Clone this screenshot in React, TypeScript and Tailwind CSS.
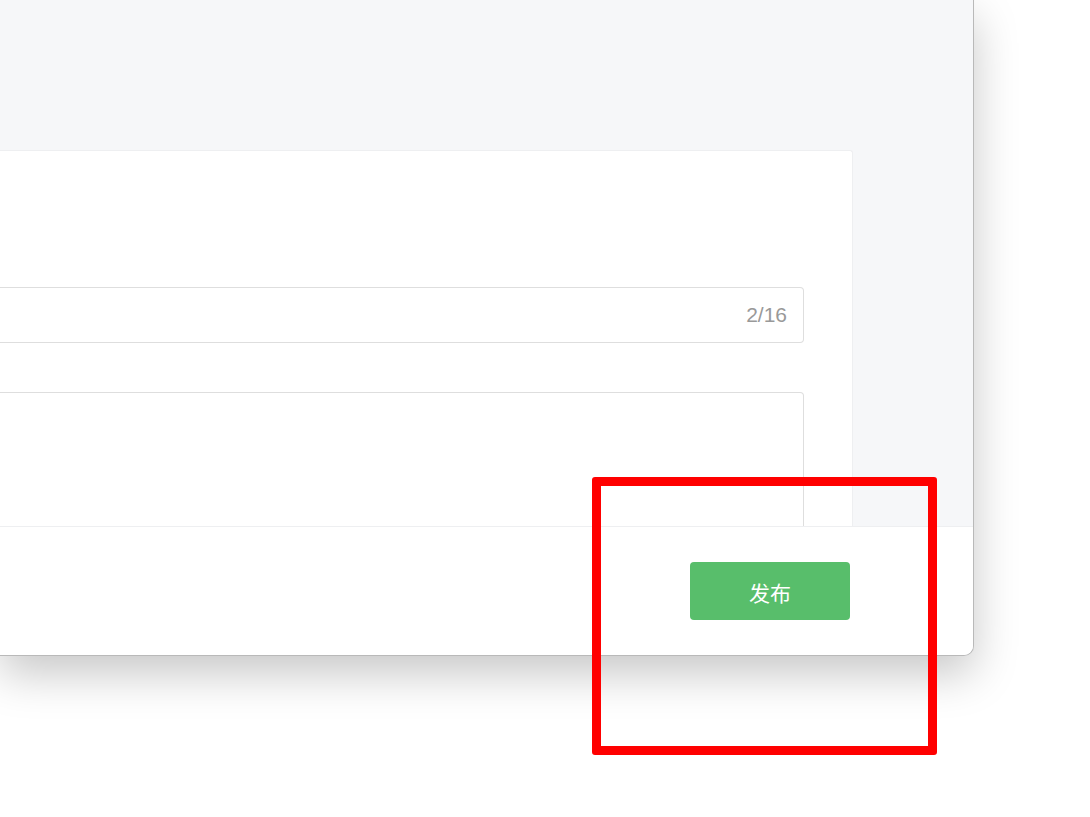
import React from "react";

export default function App() {
  return (
    <div
      className="relative w-[1090px] h-[817px] overflow-hidden bg-white"
      style={{ fontFamily: '"Noto Sans", "Noto Sans CJK SC", sans-serif' }}
    >
      {/* window */}
      <div className="flex flex-col w-[974px] h-[656px] overflow-hidden rounded-br-[10px] border-r border-b border-[#b9b9b9] bg-[#f6f7f9] shadow-[0_18px_45px_rgba(0,0,0,0.22)]">
        <div className="flex-1 overflow-hidden pt-[150px]">
          <div className="w-[853px] h-full bg-white border-r border-t border-[#eeeff1] rounded-tr-[3px] pt-[136px] pr-[48px]">
            <div className="flex items-center justify-end h-[56px] border border-l-0 border-[#dedede] rounded-r-[4px] pr-[16px]">
              <span className="text-[21px] text-[#999999]" style={{ fontFamily: '"Liberation Sans", sans-serif' }}>
                2/16
              </span>
            </div>
            <div className="mt-[49px] h-[200px] border border-l-0 border-[#dedede] rounded-tr-[4px]" />
          </div>
        </div>
        <div className="flex items-start justify-end h-[129px] shrink-0 bg-white border-t border-[#eeeff1] pt-[35px] pr-[123px]">
          <button className="w-[160px] h-[58px] pt-[4px] rounded-[4px] bg-[#58be6b] text-white text-[21px] leading-none">
            发布
          </button>
        </div>
      </div>

      {/* annotation */}
      <div className="absolute left-[592px] top-[477px] w-[345px] h-[278px] border-[9px] border-[#ff0000] rounded-[3px]" />
    </div>
  );
}
